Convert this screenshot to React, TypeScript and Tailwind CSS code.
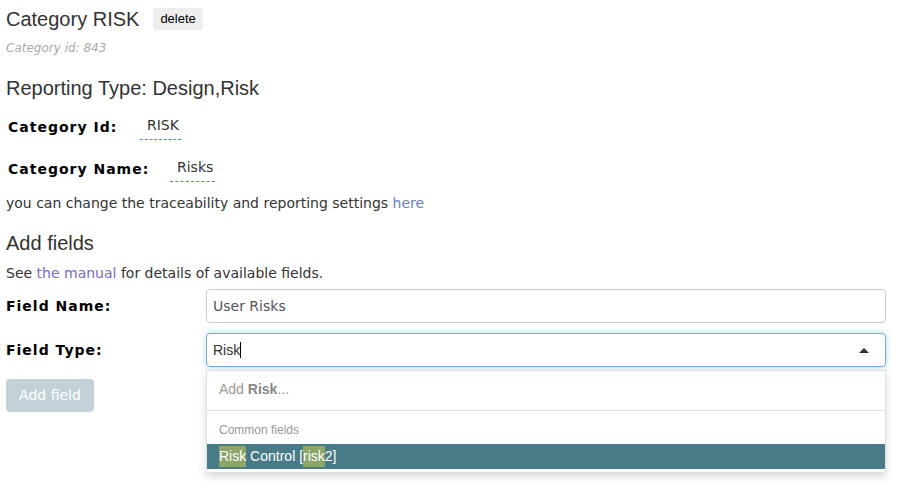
import React from 'react';

const sans = "font-['Liberation_Sans',Arial,sans-serif]";
const verd = "font-['DejaVu_Sans',Verdana,sans-serif]";

const Label: React.FC<{ children: React.ReactNode; className?: string }> = ({ children, className = "" }) => (
  <span className={`${verd} text-[14px] font-bold tracking-[1px] text-black ${className}`}>{children}</span>
);

const Editable: React.FC<{ children: React.ReactNode }> = ({ children }) => (
  <span className={`${verd} text-[14px] text-[#333] pl-[7px] pr-[2px] pb-[3px] border-b border-dashed border-[#5b7fc8]`}>{children}</span>
);

const Hl: React.FC<{ children: React.ReactNode }> = ({ children }) => (
  <span className="bg-[#8ca66a]">{children}</span>
);

export default function App() {
  return (
    <div className="w-[904px] h-[496px] bg-white pl-[6px] pr-[18px] pt-[6px] text-[#333] relative">
      <div className="flex items-center gap-[14px] h-[26px]">
        <h1 className={`${sans} text-[20px] leading-[24px] text-[#333]`}>Category RISK</h1>
        <button className={`${sans} text-[13px] bg-[#eeeeee] rounded-[3px] px-[7px] h-[22px] text-black`}>delete</button>
      </div>
      <div className={`${verd} italic text-[12px] text-[#aaa] mt-[8px] leading-[16px]`}>Category id: 843</div>

      <h2 className={`${sans} text-[20px] leading-[24px] mt-[20px]`}>Reporting Type: Design,Risk</h2>

      <div className="flex items-center mt-[16px] pl-[2px] h-[22px]">
        <Label className="w-[132px]">Category Id:</Label>
        <Editable>RISK</Editable>
      </div>
      <div className="flex items-center mt-[20px] pl-[2px] h-[22px]">
        <Label className="w-[162px]">Category Name:</Label>
        <Editable>Risks</Editable>
      </div>

      <p className={`${verd} text-[14px] mt-[13px] leading-[20px]`}>
        you can change the traceability and reporting settings <a className="text-[#6b7fc6]">here</a>
      </p>

      <h2 className={`${sans} text-[20px] leading-[24px] mt-[18px]`}>Add fields</h2>
      <p className={`${verd} text-[14px] mt-[8px] leading-[20px]`}>
        See <a className="text-[#7a6cc0]">the manual</a> for details of available fields.
      </p>

      <div className="flex items-center mt-[6px]">
        <Label className="w-[200px]">Field Name:</Label>
        <div className={`flex-1 h-[34px] border border-[#ccc] rounded-[4px] flex items-center px-[6px] ${verd} text-[14px] text-[#555]`}>User Risks</div>
      </div>

      <div className="flex items-start mt-[10px]">
        <div className="w-[200px] h-[34px] flex items-center">
          <Label>Field Type:</Label>
        </div>
        <div className="flex-1 relative">
          <div className={`h-[34px] border border-[#7ea6e0] rounded-[4px] shadow-[0_0_6px_rgba(102,175,233,0.5)] flex items-center px-[6px] ${sans} text-[14px] text-[#333]`}>
            <span>Risk</span>
            <span className="w-[1px] h-[16px] bg-black" />
            <span className="ml-auto mr-[10px] w-0 h-0 border-l-[5px] border-r-[5px] border-b-[5px] border-l-transparent border-r-transparent border-b-[#333]" />
          </div>
          <div className={`absolute left-0 right-0 top-[37px] bg-white border border-[#e0e0e0] rounded-b-[4px] shadow-[0_4px_8px_rgba(0,0,0,0.15)] ${sans}`}>
            <div className="h-[40px] flex items-center pb-[3px] px-[12px] text-[14px] text-[#999] border-b border-[#e0e0e0]">
              Add&nbsp;<b className="text-[#888]">Risk</b>...
            </div>
            <div className="h-[33px] flex items-end px-[12px] pb-[5px] text-[12px] text-[#999]">Common fields</div>
            <div className="h-[25px] flex items-center px-[12px] bg-[#497a87] text-white text-[14px]">
              <Hl>Risk</Hl>&nbsp;Control [<Hl>risk</Hl>2]
            </div>
            <div className="h-[3px]" />
          </div>
        </div>
      </div>

      <button className={`mt-[12px] h-[33px] w-[88px] rounded-[4px] bg-[#c2d2d8] text-white ${verd} text-[14px]`}>Add field</button>
    </div>
  );
}
